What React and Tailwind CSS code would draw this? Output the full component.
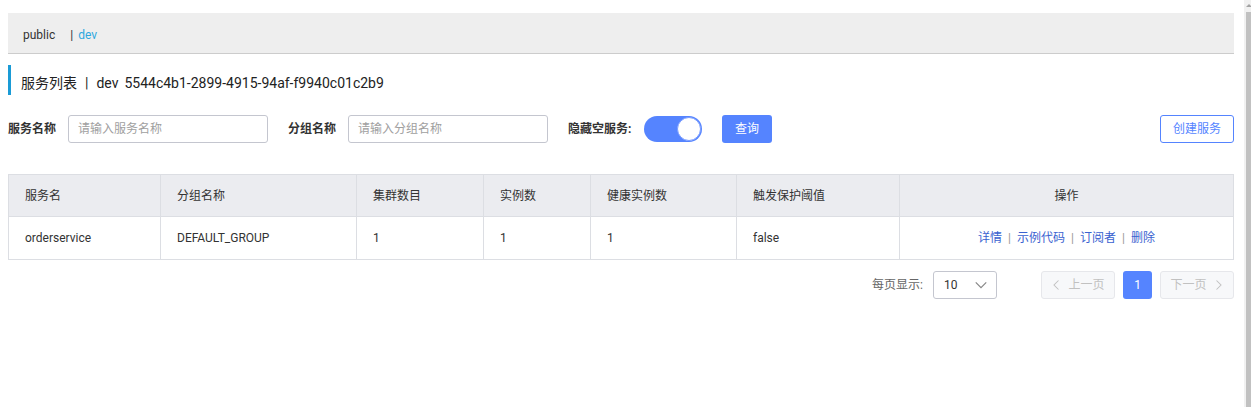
import React from "react";

const font = { fontFamily: "Roboto, 'Noto Sans CJK SC', sans-serif" };

function Chevron({ dir = "left", className = "" }) {
  const d = dir === "left" ? "M10 2 L4 8 L10 14" : dir === "right" ? "M6 2 L12 8 L6 14" : "M2 5 L8 11 L14 5";
  return (
    <svg viewBox="0 0 16 16" className={className} fill="none" stroke="currentColor" strokeWidth="1.4">
      <path d={d} />
    </svg>
  );
}

const cols = [
  { w: "w-[152px]", h: "服务名", v: "orderservice" },
  { w: "w-[196px]", h: "分组名称", v: "DEFAULT_GROUP" },
  { w: "w-[127px]", h: "集群数目", v: "1" },
  { w: "w-[107px]", h: "实例数", v: "1" },
  { w: "w-[146px]", h: "健康实例数", v: "1" },
  { w: "w-[163px]", h: "触发保护阈值", v: "false" },
];

export default function App() {
  return (
    <div className="flex w-[1251px] h-[407px] bg-white text-[#333] overflow-hidden" style={font}>
      <div className="flex-1 pl-[8px] pr-[10px] pt-[13px]">
        {/* namespace bar */}
        <div className="h-[41px] bg-[#eeeeee] border-b border-[#cccccc] flex items-center pl-[15px] pt-[3px] text-[12px]">
          <span className="text-[#333]">public</span>
          <span className="ml-[15px] text-[#333]">|</span>
          <span className="ml-[5px] text-[#2fa8de]">dev</span>
        </div>

        {/* title */}
        <div className="mt-[11px] h-[30px] border-l-[3px] border-[#1a9bd6] flex items-center pl-[10px] pt-[7px] text-[14px] text-[#222]">
          <span>服务列表</span>
          <span className="mx-[8px]">|</span>
          <span>dev</span>
          <span className="ml-[6px]">5544c4b1-2899-4915-94af-f9940c01c2b9</span>
        </div>

        {/* form */}
        <div className="mt-[20px] flex items-center h-[28px] text-[12px]">
          <span className="font-bold text-[#333] w-[60px]">服务名称</span>
          <div className="w-[200px] h-[28px] border border-[#c4c6cf] rounded-[3px] flex items-center px-[9px] text-[#a0a0a0]">
            请输入服务名称
          </div>
          <span className="font-bold text-[#333] ml-[20px] w-[60px]">分组名称</span>
          <div className="w-[200px] h-[28px] border border-[#c4c6cf] rounded-[3px] flex items-center px-[9px] text-[#a0a0a0]">
            请输入分组名称
          </div>
          <span className="font-bold text-[#333] ml-[20px] w-[76px]">隐藏空服务:</span>
          <div className="w-[58px] h-[26px] rounded-full bg-[#5584ff] relative">
            <div className="absolute right-[1px] top-[1px] w-[24px] h-[24px] rounded-full bg-white border border-[#7a9dff]" />
          </div>
          <div className="ml-[20px] w-[50px] h-[28px] rounded-[3px] bg-[#5584ff] text-white flex items-center justify-center">
            查询
          </div>
          <div className="flex-1" />
          <div className="w-[74px] h-[28px] rounded-[3px] border border-[#5584ff] text-[#5584ff] flex items-center justify-center">
            创建服务
          </div>
        </div>

        {/* table */}
        <div className="mt-[31px] border border-[#dcdee3] text-[12px]">
          <div className="flex h-[42px] bg-[#ebecf0] border-b border-[#dcdee3]">
            {cols.map((c, i) => (
              <div key={i} className={`${c.w} shrink-0 border-r border-[#dcdee3] flex items-center pl-[16px] text-[#333]`}>
                {c.h}
              </div>
            ))}
            <div className="flex-1 flex items-center justify-center text-[#333]">操作</div>
          </div>
          <div className="flex h-[42px]">
            {cols.map((c, i) => (
              <div key={i} className={`${c.w} shrink-0 border-r border-[#dcdee3] flex items-center pl-[16px] text-[#333]`}>
                {c.v}
              </div>
            ))}
            <div className="flex-1 flex items-center justify-center">
              <span className="text-[#3a62d0]">详情</span>
              <span className="mx-[6px] text-[#999]">|</span>
              <span className="text-[#3a62d0]">示例代码</span>
              <span className="mx-[6px] text-[#999]">|</span>
              <span className="text-[#3a62d0]">订阅者</span>
              <span className="mx-[6px] text-[#999]">|</span>
              <span className="text-[#3a62d0]">删除</span>
            </div>
          </div>
        </div>

        {/* pagination */}
        <div className="mt-[11px] flex items-center justify-end text-[12px]">
          <span className="text-[#666] mr-[10px]">每页显示:</span>
          <div className="w-[64px] h-[28px] border border-[#c4c6cf] rounded-[3px] flex items-center justify-between pl-[10px] pr-[8px] text-[#333]">
            <span>10</span>
            <Chevron dir="down" className="w-[14px] h-[14px] text-[#888]" />
          </div>
          <div className="ml-[44px] w-[74px] h-[28px] border border-[#e6e7eb] bg-[#f7f8fa] rounded-[3px] flex items-center justify-center text-[#c1c1c1]">
            <Chevron dir="left" className="w-[12px] h-[14px] mr-[5px]" />
            上一页
          </div>
          <div className="ml-[8px] w-[29px] h-[28px] rounded-[3px] bg-[#5584ff] text-white flex items-center justify-center">1</div>
          <div className="ml-[8px] w-[74px] h-[28px] border border-[#e6e7eb] bg-[#f7f8fa] rounded-[3px] flex items-center justify-center text-[#c1c1c1]">
            下一页
            <Chevron dir="right" className="w-[12px] h-[14px] ml-[5px]" />
          </div>
        </div>
      </div>

      {/* scrollbar */}
      <div className="w-[7px] h-full bg-[#f1f1f1] flex flex-col pl-[2px]">
        <div className="h-[12px] flex items-start justify-center">
          <div className="mt-[4px] w-0 h-0 border-l-[3px] border-r-[3px] border-b-[3px] border-l-transparent border-r-transparent border-b-[#a3a3a3]" />
        </div>
        <div className="flex-1 bg-[#c1c1c1]" />
      </div>
    </div>
  );
}
